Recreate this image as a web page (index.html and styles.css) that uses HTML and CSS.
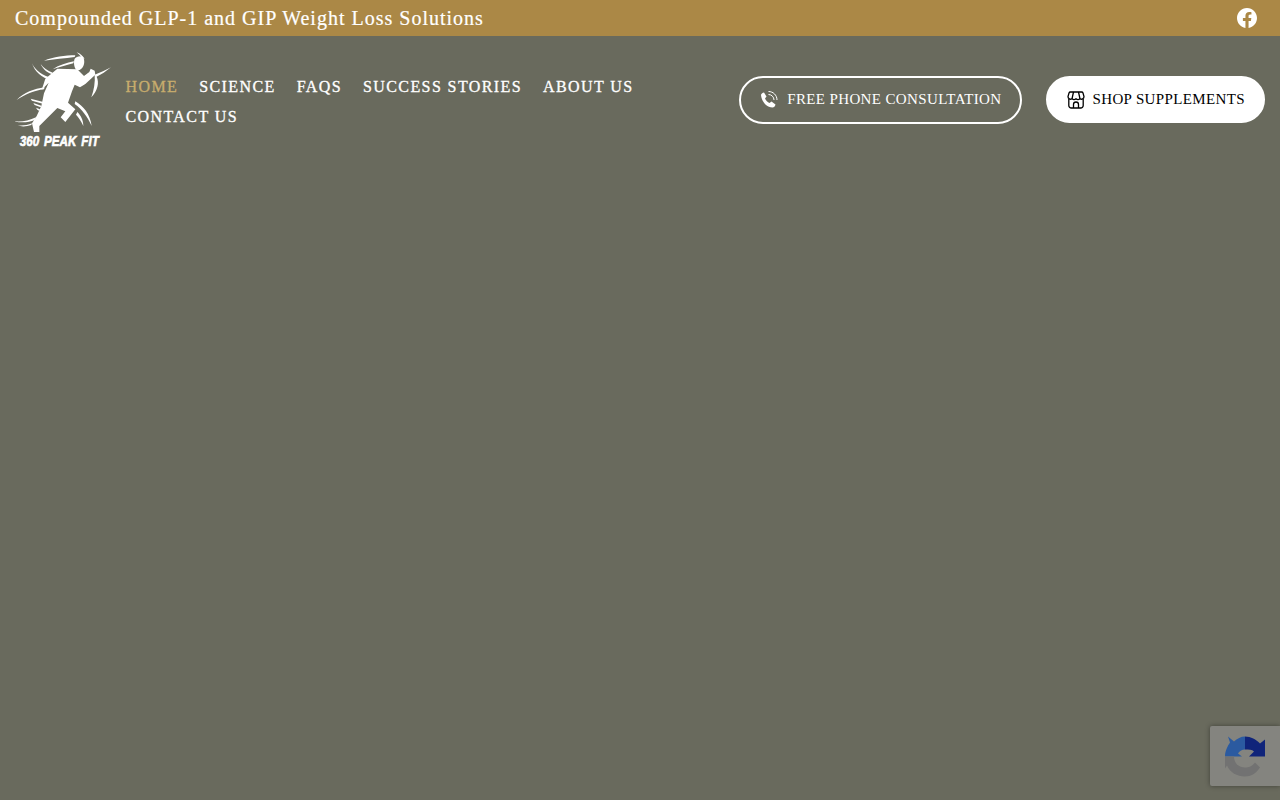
FILE: index.html
```html
<!DOCTYPE html>
<html lang="en">
<head>
  <meta charset="UTF-8">
  <meta name="viewport" content="width=device-width, initial-scale=1.0">
  <title>360 Peak Fit</title>
  <link rel="stylesheet" href="styles.css">
</head>
<body>
  <div class="top-bar">
    <span class="top-text">Compounded GLP-1 and GIP Weight Loss Solutions</span>
    <a href="#" class="fb-link" aria-label="Facebook">
      <svg width="20" height="20" viewBox="0 0 16 16" fill="#fff">
        <path d="M16 8.05C16 3.6 12.42 0 8 0S0 3.6 0 8.05c0 4.02 2.93 7.35 6.75 7.95v-5.62H4.72V8.05h2.03V6.27c0-2.01 1.2-3.13 3.02-3.13.88 0 1.79.16 1.79.16v1.98h-1.01c-.99 0-1.3.62-1.3 1.26v1.51h2.22l-.35 2.33H9.25V16C13.07 15.4 16 12.07 16 8.05z"/>
      </svg>
    </a>
  </div>

  <header class="site-header">
    <a href="#" class="logo">
      <!-- traced by eye from the logo -->
      <svg width="96" height="102" viewBox="45 36 288 306" fill="#fff">
        <path d="M224 56C228 50 240 46 248 50C254 56 254 70 250 78C246 88 238 92 230 90C222 84 220 66 224 56z"/>
        <path d="M230 37C240 40 250 48 254 58L244 51C240 46 235 42 230 37z"/>
        <path d="M226 46C196 46 160 51 132 62C160 58 196 55 224 51z"/>
        <path d="M222 64C200 68 178 75 158 88C180 81 202 75 220 70z"/>
        <path d="M172 86L232 88L240 96L252 108L268 96L272 86L284 92L286 104L256 132L240 142L224 134L216 154L204 188L226 208L196 246L182 232L196 214L172 204L142 234L118 258L118 276L102 276L96 250L110 228L124 198L132 160L146 128L125 150L136 116z"/>
        <path d="M284 104C300 98 318 90 333 82C318 94 304 104 290 110C298 128 294 150 274 172C282 150 286 126 284 104z"/>
        <path d="M96 70C106 92 128 108 156 114L152 120C126 114 104 96 96 70z"/>
        <path d="M122 72C130 84 142 92 158 98L156 102C140 98 128 86 122 72z"/>
        <path d="M50 180C72 158 102 146 134 142L132 148C102 152 74 164 50 180z"/>
        <path d="M92 176L130 186L128 191L96 182zM100 189L124 197L122 202L104 195zM108 203L120 208L118 213L112 209z"/>
        <path d="M44 244C64 246 88 242 108 232L104 240C86 248 62 249 44 244z"/>
        <path d="M52 256C66 258 82 256 96 250L94 255C80 260 64 261 52 256z"/>
        <path d="M226 184C250 198 270 222 275 258C262 230 246 208 224 192z"/>
        <path d="M232 216C242 226 250 240 250 258C244 244 236 232 228 224z"/>
        <text class="logo-text" transform="translate(59 319) scale(1 1.300)">360 PEAK FIT</text>
      </svg>
    </a>

    <nav class="main-nav">
      <a href="#" class="active">HOME</a>
      <a href="#">SCIENCE</a>
      <a href="#">FAQS</a>
      <a href="#">SUCCESS STORIES</a>
      <a href="#">ABOUT US</a>
      <a href="#">CONTACT US</a>
    </nav>

    <div class="header-buttons">
      <a href="#" class="btn btn-outline">
        <svg width="20" height="20" viewBox="0 0 20 20" fill="none">
          <path d="M2 6C2 5 3.500 3.500 5 3.500L7.500 7.500L6 9.500C7 11.500 8.500 13 10.500 14L12.500 12.500L16.500 15.500C16 17.500 15 18.500 13.500 18.500C7 18 2.500 12 2 6Z" fill="#fff"/>
          <path d="M9.500 2.500C14 2.500 18 6 18 11M9.500 5.500C12.500 5.500 15 8 15 11" stroke="#fff"/>
        </svg>
        FREE PHONE CONSULTATION
      </a>
      <a href="#" class="btn btn-solid">
        <svg width="18" height="18" viewBox="0 0 18 18" fill="none" stroke="#000" stroke-width="1.300">
          <path d="M3.500 1h11a1.500 1.500 0 0 1 1.500 1L17 5.500a2.600 2.600 0 0 1-4 2.300 3.200 3.200 0 0 1-4 0 3.200 3.200 0 0 1-4 0A2.600 2.600 0 0 1 1 5.500L2 2a1.500 1.500 0 0 1 1.500-1z"/>
          <path d="M6.500 1 5 7.800M11.500 1 13 7.800"/>
          <path d="M1.800 8v6.500a2.500 2.500 0 0 0 2.500 2.500h9.400a2.500 2.500 0 0 0 2.500-2.500V8"/>
          <path d="M6.500 17v-3.500a2.500 2.500 0 0 1 5 0V17"/>
        </svg>
        SHOP SUPPLEMENTS
      </a>
    </div>
  </header>

  <div class="recaptcha">
    <svg width="40" height="41" viewBox="0 0 40 40">
      <path d="M3 0L9 5C12 2 16 0 20 0V13C17 13 14 15 13 17L17 20H0C0 14 3 9 5 6z" fill="#2b5aa0"/>
      <path d="M20 0C26 0 31 3 35 7L40 3V20H24L29 15C27 13 24 13 20 13z" fill="#10247a"/>
      <path d="M0 20H9C9 27 14 31 20 31C24 31 27 30 30 26L35 31C31 37 26 40 20 40C12 40 5 36 2 29L0 32z" fill="#727272"/>
    </svg>
  </div>
</body>
</html>
```
FILE: styles.css
```css
* {
  box-sizing: border-box;
}
body {
  margin: 0;
  min-height: 800px;
  background-color: #696a5d;
  font-family: "Liberation Serif", "Times New Roman", serif;
  color: #fff;
}
a {
  color: inherit;
  text-decoration: none;
}
.top-bar {
  height: 36px;
  padding: 0 23px 0 15px;
  display: flex;
  align-items: center;
  justify-content: space-between;
  background-color: #ab8846;
}
.top-text {
  font-size: 20px;
  letter-spacing: 1px;
  -webkit-text-stroke: 0.2px #fff;
}
.fb-link {
  display: flex;
}
.site-header {
  padding: 16px 15px 0;
  display: flex;
  align-items: flex-start;
}
.logo {
  display: block;
  width: 96px;
  height: 96px;
  flex-shrink: 0;
}
.logo-text {
  font-family: "Liberation Sans", Arial, sans-serif;
  font-size: 35px;
  font-weight: 700;
  font-style: italic;
  word-spacing: 5px;
  stroke: #fff;
  stroke-width: 1.500px;
}
.main-nav {
  width: 560px;
  margin-left: 14.500px;
  padding-top: 20px;
  display: flex;
  flex-wrap: wrap;
  column-gap: 21px;
  font-size: 16px;
  line-height: 30px;
  letter-spacing: 1.400px;
  -webkit-text-stroke: 0.3px;
}
.main-nav .active {
  color: #c8ad6d;
}
.header-buttons {
  margin-left: auto;
  margin-top: 24px;
  display: flex;
  align-items: flex-start;
  gap: 24px;
}
.btn {
  height: 48px;
  padding: 0 18px 2px 18px;
  display: flex;
  align-items: center;
  gap: 8px;
  border: 2px solid #fff;
  border-radius: 24px;
  font-size: 15px;
  letter-spacing: 0.370px;
}
.btn-solid {
  height: 47px;
  padding: 0 18px 0 19px;
  background-color: #fff;
  color: #000;
}
.recaptcha {
  position: fixed;
  right: 0;
  bottom: 14px;
  width: 70px;
  height: 60px;
  padding: 10px 0 0 15px;
  background-color: #84847f;
  border-radius: 2px 0 0 2px;
  box-shadow: 0 0 5px rgba(0, 0, 0, 0.4);
}
```
